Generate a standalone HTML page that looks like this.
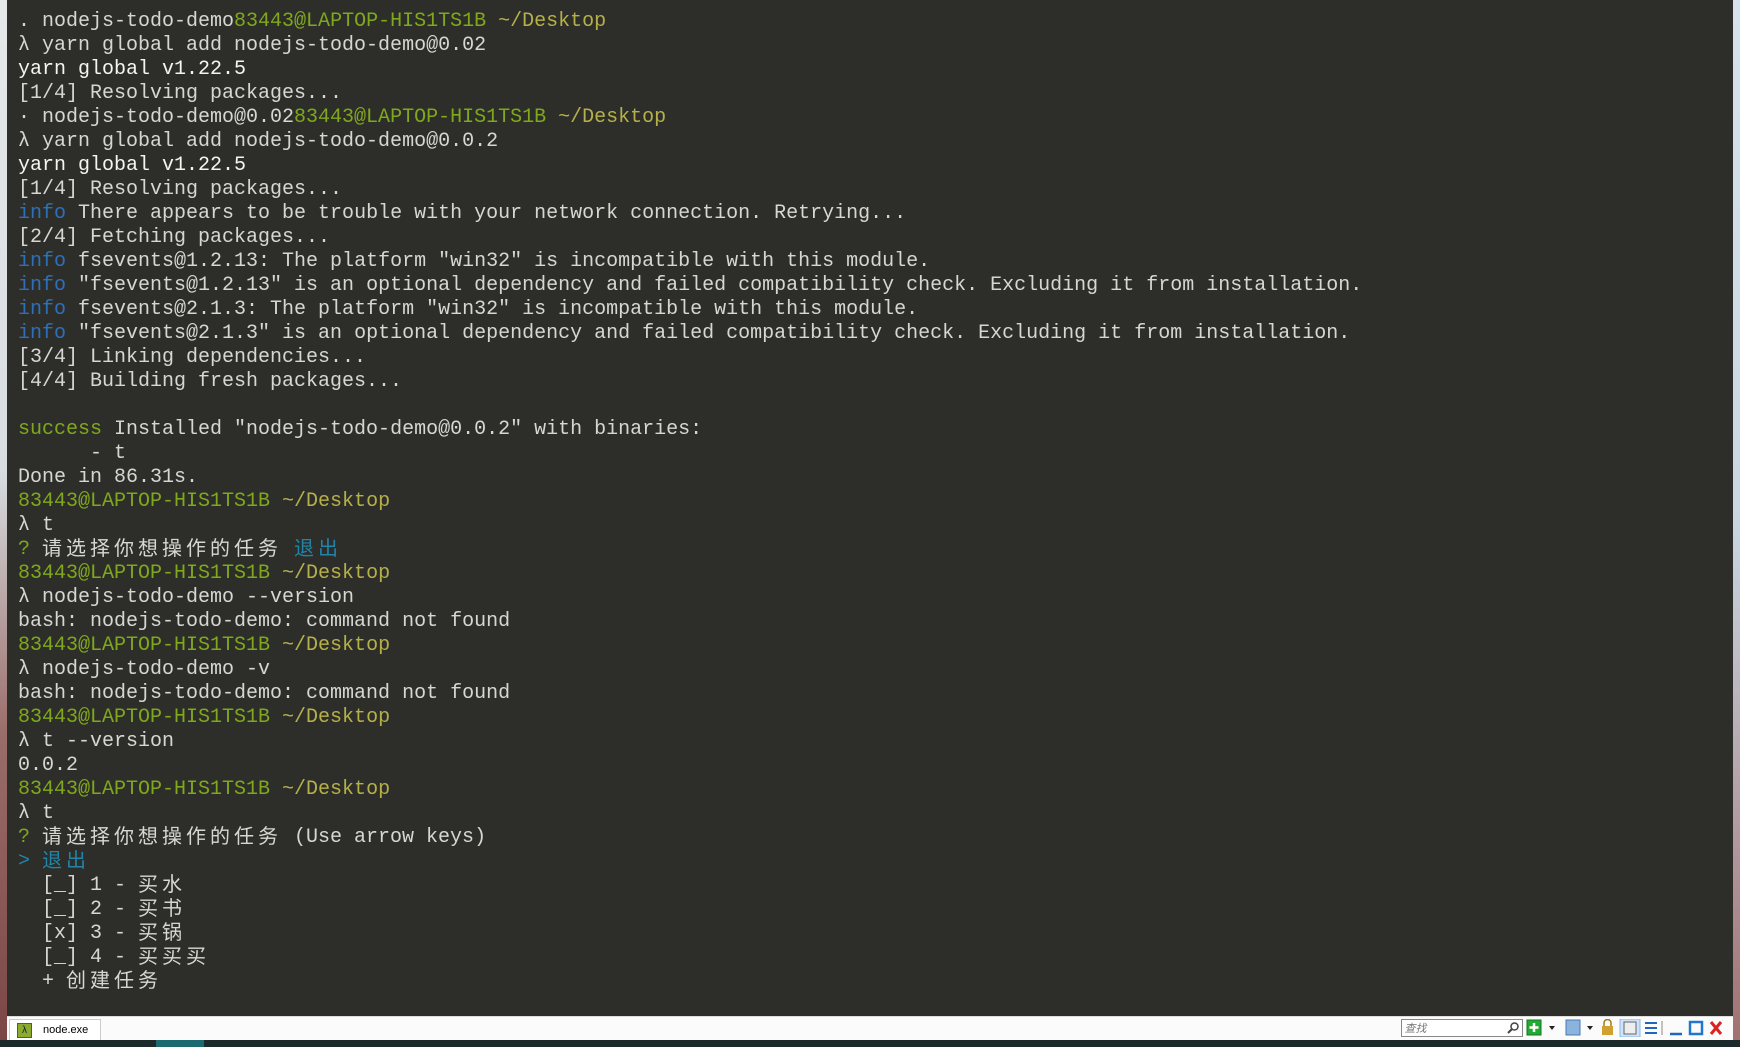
<!DOCTYPE html>
<html><head><meta charset="utf-8"><style>
html,body{margin:0;padding:0;width:1740px;height:1047px;overflow:hidden;background:#2d2e29;}
#left{position:absolute;left:0;top:0;width:7px;height:1047px;background:linear-gradient(#e6e8ea 0%,#d8dde2 45%,#9a6d6a 70%,#7a4645 100%);}
#right{position:absolute;left:1733px;top:0;width:7px;height:1047px;background:linear-gradient(#d8e2ec 0%,#c9d6e2 50%,#a07070 100%);}
#term{position:absolute;left:18px;top:10px;font-family:"Liberation Mono","Noto Sans CJK SC",monospace;font-size:20px;line-height:24px;color:#d6d6d2;white-space:pre;}
.g{color:#80a81c}.y{color:#b6b04a}.b{color:#2f6fb8}.w{color:#f4f4f4}.c{color:#2284a8}
.z{font-family:"Noto Sans CJK SC","WenQuanYi Zen Hei",sans-serif;letter-spacing:4px;font-size:20px;line-height:24px;vertical-align:top;display:inline-block;height:24px;position:relative;top:-3px}
#bar{position:absolute;left:7px;top:1016px;width:1726px;height:24px;background:#fbfbfb;border-top:1px solid #ddd;}
#bot{position:absolute;left:0;top:1040px;width:1740px;height:7px;background:#1d2a2c;}
#bot2{position:absolute;left:156px;top:1040px;width:48px;height:7px;background:#1a6a70;}
#tab{position:absolute;left:9px;top:1019px;width:90px;height:20px;border:1px solid #ccc;border-bottom:none;background:#fff;font:11px "Liberation Sans",sans-serif;}
#tab .ic{position:absolute;left:7px;top:3px;width:13px;height:13px;background:#8aaa30;border:1px solid #555;color:#222;font-size:10px;line-height:13px;text-align:center}
#tab span{position:absolute;left:33px;top:4px;color:#000}
#search{position:absolute;left:1401px;top:1019px;width:120px;height:16px;border:1px solid #888;background:#fff;font:italic 11px "Noto Sans CJK SC",sans-serif;color:#777;}
</style></head><body>
<div id="left"></div><div id="right"></div>
<div id="term"><span>. nodejs-todo-demo</span><span class="g">83443@LAPTOP-HIS1TS1B</span><span class="y"> ~/Desktop</span>
λ yarn global add nodejs-todo-demo@0.02
<span class="w">yarn global v1.22.5</span>
[1/4] Resolving packages...
· nodejs-todo-demo@0.02<span class="g">83443@LAPTOP-HIS1TS1B</span><span class="y"> ~/Desktop</span>
λ yarn global add nodejs-todo-demo@0.0.2
<span class="w">yarn global v1.22.5</span>
[1/4] Resolving packages...
<span class="b">info</span> There appears to be trouble with your network connection. Retrying...
[2/4] Fetching packages...
<span class="b">info</span> fsevents@1.2.13: The platform "win32" is incompatible with this module.
<span class="b">info</span> "fsevents@1.2.13" is an optional dependency and failed compatibility check. Excluding it from installation.
<span class="b">info</span> fsevents@2.1.3: The platform "win32" is incompatible with this module.
<span class="b">info</span> "fsevents@2.1.3" is an optional dependency and failed compatibility check. Excluding it from installation.
[3/4] Linking dependencies...
[4/4] Building fresh packages...

<span class="g">success</span> Installed "nodejs-todo-demo@0.0.2" with binaries:
      - t
Done in 86.31s.
<span class="g">83443@LAPTOP-HIS1TS1B</span><span class="y"> ~/Desktop</span>
λ t
<span class="g">?</span> <span class="z">请选择你想操作的任务</span> <span class="z c">退出</span>
<span class="g">83443@LAPTOP-HIS1TS1B</span><span class="y"> ~/Desktop</span>
λ nodejs-todo-demo --version
bash: nodejs-todo-demo: command not found
<span class="g">83443@LAPTOP-HIS1TS1B</span><span class="y"> ~/Desktop</span>
λ nodejs-todo-demo -v
bash: nodejs-todo-demo: command not found
<span class="g">83443@LAPTOP-HIS1TS1B</span><span class="y"> ~/Desktop</span>
λ t --version
0.0.2
<span class="g">83443@LAPTOP-HIS1TS1B</span><span class="y"> ~/Desktop</span>
λ t
<span class="g">?</span> <span class="z">请选择你想操作的任务</span> (Use arrow keys)
<span class="c">&gt; <span class="z">退出</span></span>
  [_] 1 - <span class="z">买水</span>
  [_] 2 - <span class="z">买书</span>
  [x] 3 - <span class="z">买锅</span>
  [_] 4 - <span class="z">买买买</span>
  + <span class="z">创建任务</span></div>
<div id="bar"></div>
<div id="tab"><div class="ic">λ</div><span>node.exe</span></div>
<div id="search">&nbsp;查找<svg style="position:absolute;right:3px;top:2px" width="12" height="12"><circle cx="7.5" cy="4.5" r="3.5" fill="none" stroke="#444" stroke-width="1.5"/><path d="M5 7 L1 11" stroke="#444" stroke-width="2"/></svg></div>
<svg style="position:absolute;left:1525px;top:1019px" width="210" height="18">
<rect x="2" y="1" width="14" height="15" fill="#22aa33" stroke="#117722"/><path d="M9 4v9M4.5 8.5h9" stroke="#fff" stroke-width="2.5"/>
<path d="M24 7h6l-3 4z" fill="#222"/>
<rect x="41" y="1" width="14" height="15" fill="#8ab4dd" stroke="#4a7ab0"/>
<path d="M62 7h6l-3 4z" fill="#222"/>
<rect x="77" y="7" width="11" height="9" fill="#d0a030"/><path d="M79 7v-3a3.5 3.5 0 0 1 7 0v3" fill="none" stroke="#a07a20" stroke-width="1.5"/>
<rect x="95" y="0" width="20" height="18" fill="#cfe4fa" stroke="#88b8e8"/><rect x="99" y="3" width="12" height="12" fill="#eee" stroke="#666"/>
<path d="M120 4h12M120 9h12M120 14h12" stroke="#2266bb" stroke-width="2"/>
<path d="M137 2v14" stroke="#888"/>
<path d="M145 15h12" stroke="#2266bb" stroke-width="2.5"/>
<rect x="165" y="3" width="12" height="12" fill="none" stroke="#2277cc" stroke-width="2.5"/>
<path d="M186 3l10 12M196 3l-10 12" stroke="#dd2222" stroke-width="3"/>
</svg>
<div id="bot"></div><div id="bot2"></div>
</body></html>
